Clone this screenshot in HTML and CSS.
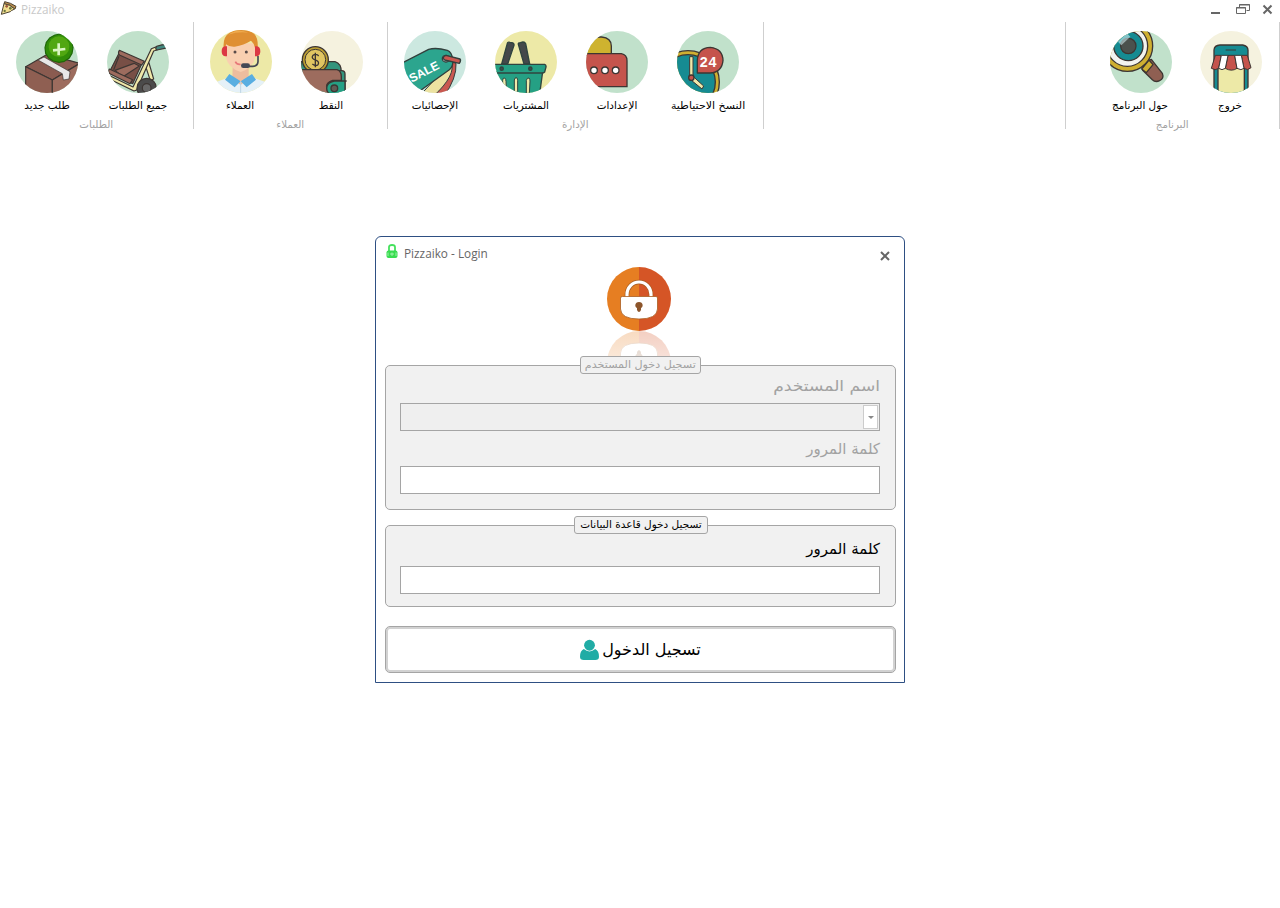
FILE: index.html
```
<!DOCTYPE html>
<html lang="ar">
<head>
<meta charset="utf-8">
<title>Pizzaiko</title>
<link rel="stylesheet" href="styles.css">
</head>
<body>
<header class="titlebar">
  <svg class="pizza" viewBox="0 0 51 48"><path d="M14 5Q32 8 48 19L45 27Q30 12 12 12Z" fill="#b98a4a" stroke="#4d4332" stroke-width="3"/><path d="M12 11Q30 13 44 27L34 32 31 35 4 43Z" fill="#f2df91" stroke="#4d4332" stroke-width="3"/><circle cx="20" cy="19" r="4" fill="#9d563b"/><circle cx="31" cy="25" r="4" fill="#69743a"/><circle cx="14" cy="33" r="3.5" fill="#69743a"/></svg>
  <span class="app-name">Pizzaiko</span>
  <svg class="window-controls" viewBox="0 0 66 18" fill="none" stroke="#666"><path d="M1 13H10" stroke-width="2"/><path d="M29.500 8V4.500H39.500V10.500H36.500M29 5H40" /><path d="M26.500 7.500H35.500V13.500H26.500ZM26 8H36"/><path d="M53.500 5.500L61.500 13.500M61.500 5.500L53.500 13.500" stroke-width="2"/></svg>
</header>

<nav class="ribbon">
  <section class="group orders">
    <div class="items">
      <a class="item"><svg class="icon" viewBox="48 93 186 186" stroke="#3d3633" stroke-width="3.500" stroke-linejoin="round"><path d="M48 93h186v186H48z" fill="#c1e1cb" stroke="none"/><path d="M77 200L142 163 240 190 157 240Z" fill="#8a5b50"/><path d="M77 200L157 240V290H77Z" fill="#8f5f52"/><path d="M157 240L240 190V290H157Z" fill="#9d6c5e"/><path d="M114 180L132 171 210 215 207 237 190 240 187 221Z" fill="#e8e8e8" stroke-width="2"/><path d="M165 105L181 102 196 106 208 114 216 126 219 143 216 160 207 175 193 184 177 187 160 183 146 174 137 160 135 143 139 127 150 113Z" fill="#318d08" stroke="#1e6708"/><circle cx="177" cy="140" r="31" fill="#51a711" stroke="none"/><path d="M176 130V166M159 151L196 147" stroke="#d9f5c2" stroke-width="8"/></svg><span>طلب جديد</span></a>
      <a class="item"><svg class="icon" viewBox="321 93 186 186" stroke="#3d3633" stroke-width="3.500" stroke-linejoin="round"><path d="M321 93h186v186H321z" fill="#c1e1cb" stroke="none"/><path d="M357 160L426 190 398 251 327 218Z" fill="#784f46"/><path d="M345 211L402 190 418 198 369 230ZM341 209L357 169" fill="#9d6c5e"/><path d="M358 151Q352 161 360 166L425 195 433 184Z" fill="#9d6c5e"/><path d="M328 207Q322 217 331 222L390 251 398 239Z" fill="#9d6c5e"/><path d="M435 193L447 189 461 237 451 242Z" fill="#efe8a9"/><path d="M323 224L399 261 454 146 469 140 471 150 461 153 410 270 402 273 322 234Z" fill="#efe8a9"/><circle cx="440" cy="264" r="29" fill="#4b4b4b"/><circle cx="440" cy="264" r="13" fill="#686868"/><path d="M470 139Q484 133 505 133V143L471 150Q464 147 470 139Z" fill="#42877e"/></svg><span>جميع الطلبات</span></a>
    </div><h2>الطلبات</h2>
  </section>
  <section class="group customers">
    <div class="items">
      <a class="item"><svg class="icon agent" viewBox="45 30 186 189"><path d="M45 30h186v189H45z" fill="#ede9a7"/><path d="M45 193L103 172H171L231 193V220H45Z" fill="#e5f1f8"/><path d="M113 140H161V176L137 195 112 176Z" fill="#eebd9e"/><path d="M92 70H181V110Q175 143 137 156 99 143 92 110Z" fill="#f9cfb0"/><path d="M86 84Q83 50 104 38 119 28 137 30 163 28 178 42 190 55 188 84L180 84Q178 70 168 62 147 75 119 80 102 81 93 73L92 84Z" fill="#df8f32"/><path d="M100 44Q125 24 160 38 130 34 100 44Z" fill="#efaa4c"/><path d="M96 79H90Q80 80 80 94T90 109H96ZM180 79H186Q196 80 196 94T186 109H180Z" fill="#dc3844"/><path d="M189 108V125Q188 139 173 139H147" fill="none" stroke="#454855" stroke-width="5"/><rect x="138" y="130" width="27" height="14" rx="7" fill="#454855"/><circle cx="120" cy="96" r="4.500" fill="#594b49"/><circle cx="154" cy="96" r="4.500" fill="#594b49"/><path d="M121 125Q126 135 137 133" fill="none" stroke="#e7797a" stroke-width="5"/><path d="M103 162L137 184 119 202 90 179ZM171 162L137 184 155 202 183 179Z" fill="#58aee1"/><path d="M137 184V220" stroke="#bdd5e4" stroke-width="3"/></svg><span>العملاء</span></a>
      <a class="item"><svg class="icon" viewBox="318 33 186 186" stroke="#3d3633" stroke-width="4"><path d="M318 33h186v186H318z" fill="#f5f2df" stroke="none"/><path d="M318 125H420Q439 130 439 157H318Z" fill="#34957d"/><rect x="380" y="152" width="70" height="80" rx="10" fill="#34957d"/><circle cx="361" cy="119" r="39" fill="#bd9f30"/><circle cx="361" cy="119" r="31" fill="#e0c562" stroke-width="3"/><path d="M371 108Q366 101 358 104 349 108 353 115 356 119 364 121 374 126 369 134 362 140 352 132M361 98V142" fill="none"/><path d="M312 149H426Q439 153 439 170V181H413Q393 187 395 202 397 218 414 225H312Z" fill="#9d6c5e"/><path d="M455 183H418Q395 187 395 205 395 223 418 228H450V183" fill="#25a084"/><circle cx="418" cy="205" r="10" fill="#615c55"/></svg><span>النقط</span></a>
    </div><h2>العملاء</h2>
  </section>
  <section class="group manage">
    <div class="items">
      <a class="item"><svg class="icon" viewBox="48 33 186 186" stroke="#333f3c" stroke-width="4" stroke-linejoin="round"><path d="M48 33h186v186H48z" fill="#cce8e0" stroke="none"/><path d="M190 125L204 130Q207 174 167 230H130Q190 180 190 125Z" fill="#c95850" stroke-width="3"/><path d="M190 125Q205 165 137 228L100 222Z" fill="#ece2a1" stroke-width="3"/><path d="M40 130L122 88Q145 82 178 91 192 96 194 119 197 138 184 149L91 216 40 226Z" fill="#2ca58e"/><ellipse cx="174" cy="116" rx="11" ry="10" fill="#d9eee8"/><path d="M174 106Q167 107 165 115L170 120 214 130Q220 122 216 117Z" fill="#c95850"/><text class="sale" transform="translate(71 188) rotate(-27)" stroke="none">SALE</text></svg><span>الإحصائيات</span></a>
      <a class="item"><svg class="icon" viewBox="321 33 186 186" stroke="#30443f" stroke-width="4" stroke-linejoin="round"><path d="M321 33h186v186H321z" fill="#ede9a7" stroke="none"/><path d="M358 70Q359 65 366 67L375 69Q379 72 378 76L359 132H341ZM391 73Q390 68 397 68L405 66Q411 66 413 71L425 132H408Z" fill="#45484a"/><path d="M322 155H464L455 222H322Z" fill="#25a084"/><g fill="#eee9aa" stroke-width="3"><path d="M344 222V181Q344 173 350 174 354 177 354 184L356 222ZM379 222V180Q380 172 386 173 389 177 389 182V222ZM415 222V181Q417 173 423 174 426 177 426 183L424 222Z"/></g><path d="M315 133H470Q475 135 474 141L470 156Q467 159 462 159H315Z" fill="#25a084"/><circle cx="341" cy="146" r="5" fill="#3d4c48"/><circle cx="427" cy="146" r="5" fill="#3d4c48"/></svg><span>المشتريات</span></a>
      <a class="item"><svg class="icon" viewBox="39 33 186 186" stroke="#3d3633" stroke-width="4"><path d="M39 33h186v186H39z" fill="#c1e1cb" stroke="none"/><path d="M35 66Q61 50 86 51 115 54 115 78V105H35Z" fill="#ceb32f"/><path d="M35 101H145Q162 104 162 122V200H35Z" fill="#c5544c"/><g fill="#fff"><circle cx="63" cy="151" r="10"/><circle cx="96" cy="151" r="10"/><circle cx="128" cy="151" r="10"/></g></svg><span>الإعدادات</span></a>
      <a class="item"><svg class="icon" viewBox="312 33 186 186" stroke="#3d3633" stroke-width="4" stroke-linejoin="round"><path d="M312 33h186v186H312z" fill="#c1e1cb" stroke="none"/><circle cx="345" cy="186" r="94" fill="#cfaf31"/><circle cx="345" cy="186" r="82" fill="#168b92"/><path d="M350 110H360V170H350ZM360 169L392 198 387 207 354 180Z" fill="#efe8a9" stroke-width="3"/><circle cx="355" cy="173" r="8" fill="#c5544c"/><path d="M373 159V121Q375 83 412 82 449 86 450 121 447 157 411 159Z" fill="#c5544c"/><text class="hours" x="380" y="140" stroke="none">24</text></svg><span class="long">النسخ الاحتياطية</span></a>
    </div><h2>الإدارة</h2>
  </section>
  <section class="group program">
    <div class="items">
      <a class="item"><svg class="icon" viewBox="150 93 186 186" stroke="#3d3633" stroke-width="4" stroke-linejoin="round"><path d="M150 93h186v186H150z" fill="#c1e1cb" stroke="none"/><path d="M259 184L274 178 307 220Q313 236 299 242 286 248 277 239L248 211Z" fill="#8f5f52"/><path d="M267 180L279 194 259 218 245 207Z" fill="#cfaf31"/><circle cx="202" cy="138" r="76" fill="#cfaf31"/><circle cx="202" cy="138" r="61" fill="#f3f3ef"/><circle cx="205" cy="138" r="44" fill="#168b92"/><circle cx="205" cy="138" r="23" fill="#4b514d"/><path d="M174 125L201 100 211 110 184 136Z" fill="#cce9ec" opacity=".6" stroke="none"/></svg><span>حول البرنامج</span></a>
      <a class="item exit"><svg class="icon" viewBox="420 93 186 186" stroke="#3d3633" stroke-width="4" stroke-linejoin="round"><path d="M420 93h186v186H420z" fill="#f5f2df" stroke="none"/><path d="M462 290V150Q463 136 480 135H548Q564 138 564 151V290Z" fill="#168b92"/><path d="M474 200H553V290H474Z" fill="#ede9a7"/><path d="M466 166H484L476 205Q466 213 454 205ZM504 166H524L531 205Q515 216 496 205ZM544 166H562L573 203Q563 213 552 205Z" fill="#c5544c" stroke-width="3"/><path d="M484 166L476 205Q486 213 496 205L504 166ZM524 166L531 205Q544 213 552 205L544 166Z" fill="#fff" stroke-width="3"/><path d="M497 150H528" stroke-width="3"/></svg><span>خروج</span></a>
    </div><h2>البرنامج</h2>
  </section>
</nav>

<main class="dialog">
  <div class="dialog-head">
    <svg class="lock" viewBox="0 0 12 15"><path d="M3 7V3Q3 1 6 1T9 3V7" fill="none" stroke="#45e15d" stroke-width="1.800"/><rect x=".5" y="6.500" width="11" height="7.500" rx="2" fill="#39dc50"/><path d="M6 8.500V12M4 10H8M2 8.500V12M10 8.500V12" stroke="#b4f7bd" stroke-width=".8"/></svg>
    <span>Pizzaiko - Login</span>
    <svg class="close" viewBox="0 0 10 10"><path d="M1 1L9 9M9 1L1 9" stroke="#666" stroke-width="2"/></svg>
  </div>
  <div class="emblem">
    <svg viewBox="0 0 64 90">
      <defs>
        <g id="padlock"><path d="M32 0A32 32 0 0 0 32 64Z" fill="#e67e22"/><path d="M32 0A32 32 0 0 1 32 64Z" fill="#d55526"/><path d="M20 31V27.500A12 12.500 0 0 1 44 27.500V31" fill="none" stroke="#a95d20" stroke-width="4.600"/><path d="M20 31V27.500A12 12.500 0 0 1 44 27.500V31" fill="none" stroke="#fff" stroke-width="3.200"/><path d="M13.500 31Q13.500 29.500 15.500 29.500H49Q50.500 29.500 50.500 31V42Q50 52 32 52T13.500 42Z" fill="#fff" stroke="#a95d20" stroke-width=".8"/><path d="M32 35C27.500 35 27.500 40 30 41Q29.500 44 32 45 34.500 44 34 41C36.500 40 36.500 35 32 35Z" fill="#8c552b"/></g>
        <linearGradient id="fade" x1="0" y1="0" x2="0" y2="1"><stop offset="0" stop-color="#fff" stop-opacity=".72"/><stop offset="1" stop-color="#fff" stop-opacity=".82"/></linearGradient>
      </defs>
      <use href="#padlock"/><use href="#padlock" transform="matrix(1 0 0 -1 0 128)"/><path d="M0 64h64v26H0z" fill="url(#fade)"/>
    </svg>
  </div>
  <section class="panel user-panel">
    <h3 class="legend"><span>تسجيل دخول المستخدم</span></h3>
    <label class="field-name user-name">اسم المستخدم</label>
    <div class="field select"><span class="arrow"></span></div>
    <label class="field-name">كلمة المرور</label>
    <div class="field"></div>
  </section>
  <section class="panel db-panel">
    <h3 class="legend"><span>تسجيل دخول قاعدة البيانات</span></h3>
    <label class="field-name">كلمة المرور</label>
    <div class="field"></div>
  </section>
  <button class="login"><span>تسجيل الدخول</span><svg viewBox="0 0 20 22" fill="#20aca5"><circle cx="10" cy="6" r="5.700"/><path d="M4 10Q10 15 16 10 20 12 20 18 20 21.500 16 21.500H4Q0 21.500 0 18 0 12 4 10Z"/></svg></button>
</main>
</body>
</html>
```

FILE: styles.css
```
* { box-sizing: border-box; }
body { margin: 0; height: 908px; overflow: hidden; background: #fff; color: #111; font-family: "DejaVu Sans", sans-serif; }
h2, h3 { margin: 0; font-weight: normal; }
.titlebar { display: flex; height: 22px; align-items: flex-start; }
.pizza { width: 17px; height: 16px; }
.app-name { margin-left: 4px; font: 11.7px/18px "Open Sans", sans-serif; color: #c9c9c9; }
.window-controls { width: 66px; height: 18px; margin-left: auto; margin-right: 4px; }
.ribbon { display: flex; height: 107px; }
.group { border-right: 1px solid #cfcfcf; padding-left: 1.5px; }
.orders, .customers { width: 194px; }
.manage { width: 376px; }
.program { width: 215px; margin-left: auto; padding-left: 29.5px; border-left: 1px solid #cfcfcf; }
.items { display: flex; height: 92px; padding-top: 9px; }
.item { width: 91px; display: flex; flex-direction: column; align-items: center; }
.exit { margin-left: -1px; }
.icon { display: block; width: 62px; height: 62px; border-radius: 50%; overflow: hidden; flex: none; }
.agent { height: 63px; margin-top: -1px; }
.item span { font-size: 10.4px; line-height: 16px; margin-top: 4px; white-space: nowrap; direction: rtl; color: #000; }
.item .long { transform: scaleX(1.06); }
.customers .item span, .program .item span { margin-right: 2px; }
.group h2 { font-size: 10.3px; line-height: 16px; margin-top: 2px; padding-right: 2px; text-align: center; color: #a2a2a2; direction: rtl; }
.group.program h2 { padding-right: 30px; }
.sale { font: bold 36px "Liberation Sans", sans-serif; fill: #fff; }
.hours { font: bold 43px "Liberation Sans", sans-serif; fill: #fff; letter-spacing: 3px; }
.dialog { width: 530px; height: 447px; margin: 107px auto 0; padding: 0 8px 0 9px; border: 1px solid #2e4f83; border-radius: 6px 6px 0 0; }
.dialog-head { display: flex; height: 30px; padding: 7px 6px 0 1px; font: 11.8px/18px "Open Sans", sans-serif; color: #666; }
.lock { width: 12px; height: 15px; margin-right: 6px; }
.close { width: 10px; height: 10px; margin: 7px 0 0 auto; }
.emblem { display: flex; justify-content: center; height: 98px; padding-right: 3px; }
.emblem svg { width: 64px; height: 90px; }
.panel { display: flex; flex-direction: column; direction: rtl; border: 1px solid #a5a5a5; border-radius: 5px; background: #f1f1f1; padding: 0 15px 0 14px; }
.user-panel { height: 145px; color: #a2a2a2; }
.db-panel { height: 82px; margin-top: 15px; color: #000; }
.legend { align-self: center; height: 18px; margin-top: -10px; border: 1px solid #a5a5a5; border-radius: 3px; background: #f1f1f1; font-size: 10.5px; line-height: 15px; text-align: center; white-space: nowrap; }
.legend span { display: inline-block; }
.user-panel .legend { width: 121px; }
.user-panel .legend span { transform: scaleX(1.06); }
.db-panel .legend { width: 134px; margin-left: 1px; margin-right: -1px; }
.field-name { height: 29px; font-size: 15px; line-height: 25px; }
.user-name { transform: scaleX(1.14); transform-origin: right; }
.field { height: 28px; border: 1px solid #a5a5a5; background: #fff; }
.select { display: flex; background: #efefef; margin-bottom: 6px; padding: 1px; }
.db-panel .field-name { height: 32px; line-height: 30px; }
.arrow { width: 15px; height: 24px; border: 1px solid #ccc; background: #fff; display: flex; align-items: center; justify-content: center; }
.arrow::after { content: ""; border: 3px solid transparent; border-top-color: #888; border-bottom: 0; }
.login { width: 511px; height: 47px; margin-top: 19px; display: flex; align-items: center; justify-content: center; gap: 3px; direction: rtl; border: 1px solid #a5a5a5; border-radius: 5px; box-shadow: inset 0 0 0 2px #d2d2d2; background: #fff; padding: 0; color: #000; font: 16px "DejaVu Sans", sans-serif; }
.login svg { width: 19px; height: 22px; }
```
